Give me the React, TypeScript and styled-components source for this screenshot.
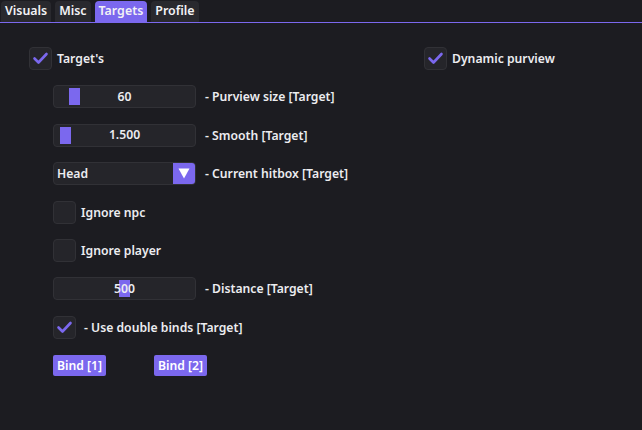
import React from "react";
import styled, { createGlobalStyle } from "styled-components";

const ACCENT = "#7b68ee";
const BG = "#1c1c21";
const FRAME = "#25252a";
const BORDER = "#313136";
const TEXT = "#ececf0";

const Global = createGlobalStyle`
  html, body { margin: 0; padding: 0; background: ${BG}; }
  body { width: 642px; height: 430px; overflow: hidden; font-family: "Noto Sans", "Open Sans", sans-serif; font-weight: 600; font-size: 12.2px; color: ${TEXT}; }
  * { box-sizing: border-box; }
`;

const Page = styled.div`
  width: 642px;
  height: 430px;
  background: ${BG};
  display: flex;
  flex-direction: column;
`;

const TabBar = styled.div`
  display: flex;
  align-items: flex-end;
  gap: 4px;
  height: 23px;
  padding: 0 0 0 1px;
  border-bottom: 1px solid ${ACCENT};
`;

const Tab = styled.div<{ $active?: boolean }>`
  height: 21px;
  padding: 0 4px;
  display: flex;
  align-items: center;
  border-radius: 4px 4px 0 0;
  background: ${(p) => (p.$active ? ACCENT : "#29292e")};
  color: #f2f2f5;
  font-size: 12.4px;
  line-height: 1;
`;

const Content = styled.div`
  padding: 24px 0 0 29px;
  display: flex;
  flex-direction: column;
  gap: 15.4px;
`;

const TopRow = styled.div`
  display: grid;
  grid-template-columns: 395px auto;
`;

const Indented = styled.div`
  padding-left: 24px;
  display: flex;
  flex-direction: column;
  gap: 15.4px;
`;

const Row = styled.div`
  display: flex;
  align-items: center;
  height: 23px;
`;

const Box = styled.div`
  width: 23px;
  height: 23px;
  border-radius: 4px;
  background: ${FRAME};
  border: 1px solid ${BORDER};
  display: flex;
  align-items: center;
  justify-content: center;
  flex: none;
`;

const Label = styled.span<{ $gap?: number }>`
  margin-left: ${(p) => p.$gap ?? 5}px;
  white-space: nowrap;
`;

const Frame = styled.div`
  position: relative;
  width: 143px;
  height: 23px;
  border-radius: 4px;
  background: ${FRAME};
  border: 1px solid ${BORDER};
  display: flex;
  align-items: center;
  justify-content: center;
  flex: none;
`;

const Grab = styled.div`
  position: absolute;
  top: 2px;
  bottom: 2px;
  width: 11px;
  background: ${ACCENT};
`;

const Value = styled.span`
  position: relative;
  line-height: 1;
`;

const Combo = styled.div`
  width: 143px;
  height: 23px;
  border-radius: 4px;
  background: ${FRAME};
  border: 1px solid ${BORDER};
  display: flex;
  align-items: center;
  overflow: hidden;
  flex: none;
`;

const ComboText = styled.span`
  flex: 1;
  padding-left: 3px;
`;

const ComboArrow = styled.div`
  width: 22px;
  height: 100%;
  background: ${ACCENT};
  display: flex;
  align-items: center;
  justify-content: center;
`;

const ButtonRow = styled.div`
  display: grid;
  grid-template-columns: 101px auto;
  height: 22px;
  align-items: center;
`;

const Button = styled.div`
  justify-self: start;
  height: 21px;
  padding: 0 4px;
  background: ${ACCENT};
  border-radius: 2px;
  display: flex;
  align-items: center;
  color: #fff;
`;

const Check = () => (
  <svg width="17" height="17" viewBox="0 0 17 17">
    <path d="M2.5 8.5 L6.5 12.5 L14.5 4" fill="none" stroke={ACCENT} strokeWidth="2.6" strokeLinecap="round" strokeLinejoin="round" />
  </svg>
);

const Checkbox = ({ checked, label, gap }: { checked?: boolean; label: string; gap?: number }) => (
  <Row>
    <Box>{checked && <Check />}</Box>
    <Label $gap={gap}>{label}</Label>
  </Row>
);

const Slider = ({ value, grab, label }: { value: string; grab: number; label: string }) => (
  <Row>
    <Frame>
      <Grab style={{ left: grab }} />
      <Value>{value}</Value>
    </Frame>
    <Label $gap={9}>{label}</Label>
  </Row>
);

export default function App() {
  return (
    <Page>
      <Global />
      <TabBar>
        <Tab>Visuals</Tab>
        <Tab>Misc</Tab>
        <Tab $active>Targets</Tab>
        <Tab>Profile</Tab>
      </TabBar>
      <Content>
        <TopRow>
          <Checkbox checked label="Target's" />
          <Checkbox checked label="Dynamic purview" />
        </TopRow>
        <Indented>
          <Slider value="60" grab={15} label="- Purview size [Target]" />
          <Slider value="1.500" grab={6} label="- Smooth [Target]" />
          <Row>
            <Combo>
              <ComboText>Head</ComboText>
              <ComboArrow>
                <svg width="12" height="11" viewBox="0 0 12 11">
                  <path d="M0.5 0.5 H11.5 L6 10.5 Z" fill="#fff" />
                </svg>
              </ComboArrow>
            </Combo>
            <Label $gap={9}>- Current hitbox [Target]</Label>
          </Row>
          <Checkbox label="Ignore npc" />
          <Checkbox label="Ignore player" />
          <Slider value="500" grab={65} label="- Distance [Target]" />
          <Checkbox checked label="- Use double binds [Target]" gap={8} />
          <ButtonRow>
            <Button>Bind [1]</Button>
            <Button>Bind [2]</Button>
          </ButtonRow>
        </Indented>
      </Content>
    </Page>
  );
}
